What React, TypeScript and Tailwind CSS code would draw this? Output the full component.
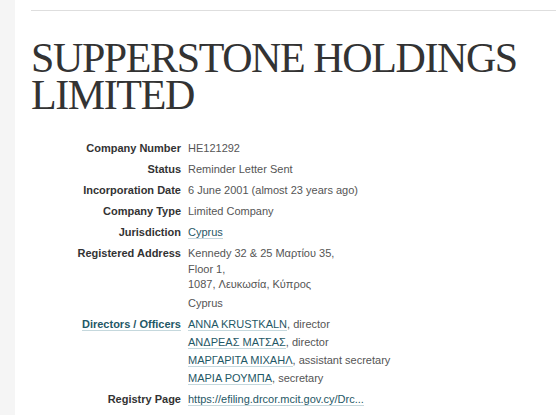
import React from 'react';

const linkCls =
  'text-[#1f5866] border-b border-[#c5d8dd] no-underline';

const Row: React.FC<{ label: React.ReactNode; children: React.ReactNode; className?: string }> = ({
  label,
  children,
  className = '',
}) => (
  <div className={`grid grid-cols-[150px_1fr] gap-x-[7px] ${className}`}>
    <dt className="text-right font-bold text-[#333]">{label}</dt>
    <dd className="text-[#555]">{children}</dd>
  </div>
);

export default function App() {
  const directors = [
    { name: 'ANNA KRUSTKALN', role: 'director' },
    { name: 'ΑΝΔΡΕΑΣ ΜΑΤΣΑΣ', role: 'director' },
    { name: 'ΜΑΡΓΑΡΙΤΑ ΜΙΧΑΗΛ', role: 'assistant secretary' },
    { name: 'ΜΑΡΙΑ ΡΟΥΜΠΑ', role: 'secretary' },
  ];

  return (
    <div className="flex min-h-[415px] bg-white font-['Liberation_Sans',Arial,sans-serif]">
      {/* side strip */}
      <div className="w-[15px] shrink-0 bg-[#f5f5f5]" />

      <div className="flex-1 pl-4">
        <div className="mt-[10px] border-t border-[#dedede]" />

        <h1 className="mt-[29px] font-['Liberation_Serif',serif] text-[42px] font-normal leading-[37px] tracking-[-1.4px] text-[#333]">
          SUPPERSTONE HOLDINGS
          <br />
          LIMITED
        </h1>

        <dl className="mt-[27px] flex flex-col gap-[6px] text-[11px] leading-[15px]">
          <Row label="Company Number">HE121292</Row>
          <Row label="Status">Reminder Letter Sent</Row>
          <Row label="Incorporation Date">6 June 2001 (almost 23 years ago)</Row>
          <Row label="Company Type">Limited Company</Row>
          <Row label="Jurisdiction">
            <a className={linkCls}>Cyprus</a>
          </Row>
          <Row label="Registered Address">
            <div className="leading-[15.5px]">
              Kennedy 32 &amp; 25 Μαρτίου 35,
              <br />
              Floor 1,
              <br />
              1087, Λευκωσία, Κύπρος
            </div>
            <div className="mt-[3px]">Cyprus</div>
          </Row>
          <Row
            label={
              <a className={linkCls}>Directors / Officers</a>
            }
          >
            <div className="flex flex-col gap-[3px]">
              {directors.map((d) => (
                <div key={d.name}>
                  <a className={linkCls}>{d.name}</a>, {d.role}
                </div>
              ))}
            </div>
          </Row>
          <Row label="Registry Page">
            <a className={linkCls}>https://efiling.drcor.mcit.gov.cy/Drc...</a>
          </Row>
        </dl>
      </div>
    </div>
  );
}
